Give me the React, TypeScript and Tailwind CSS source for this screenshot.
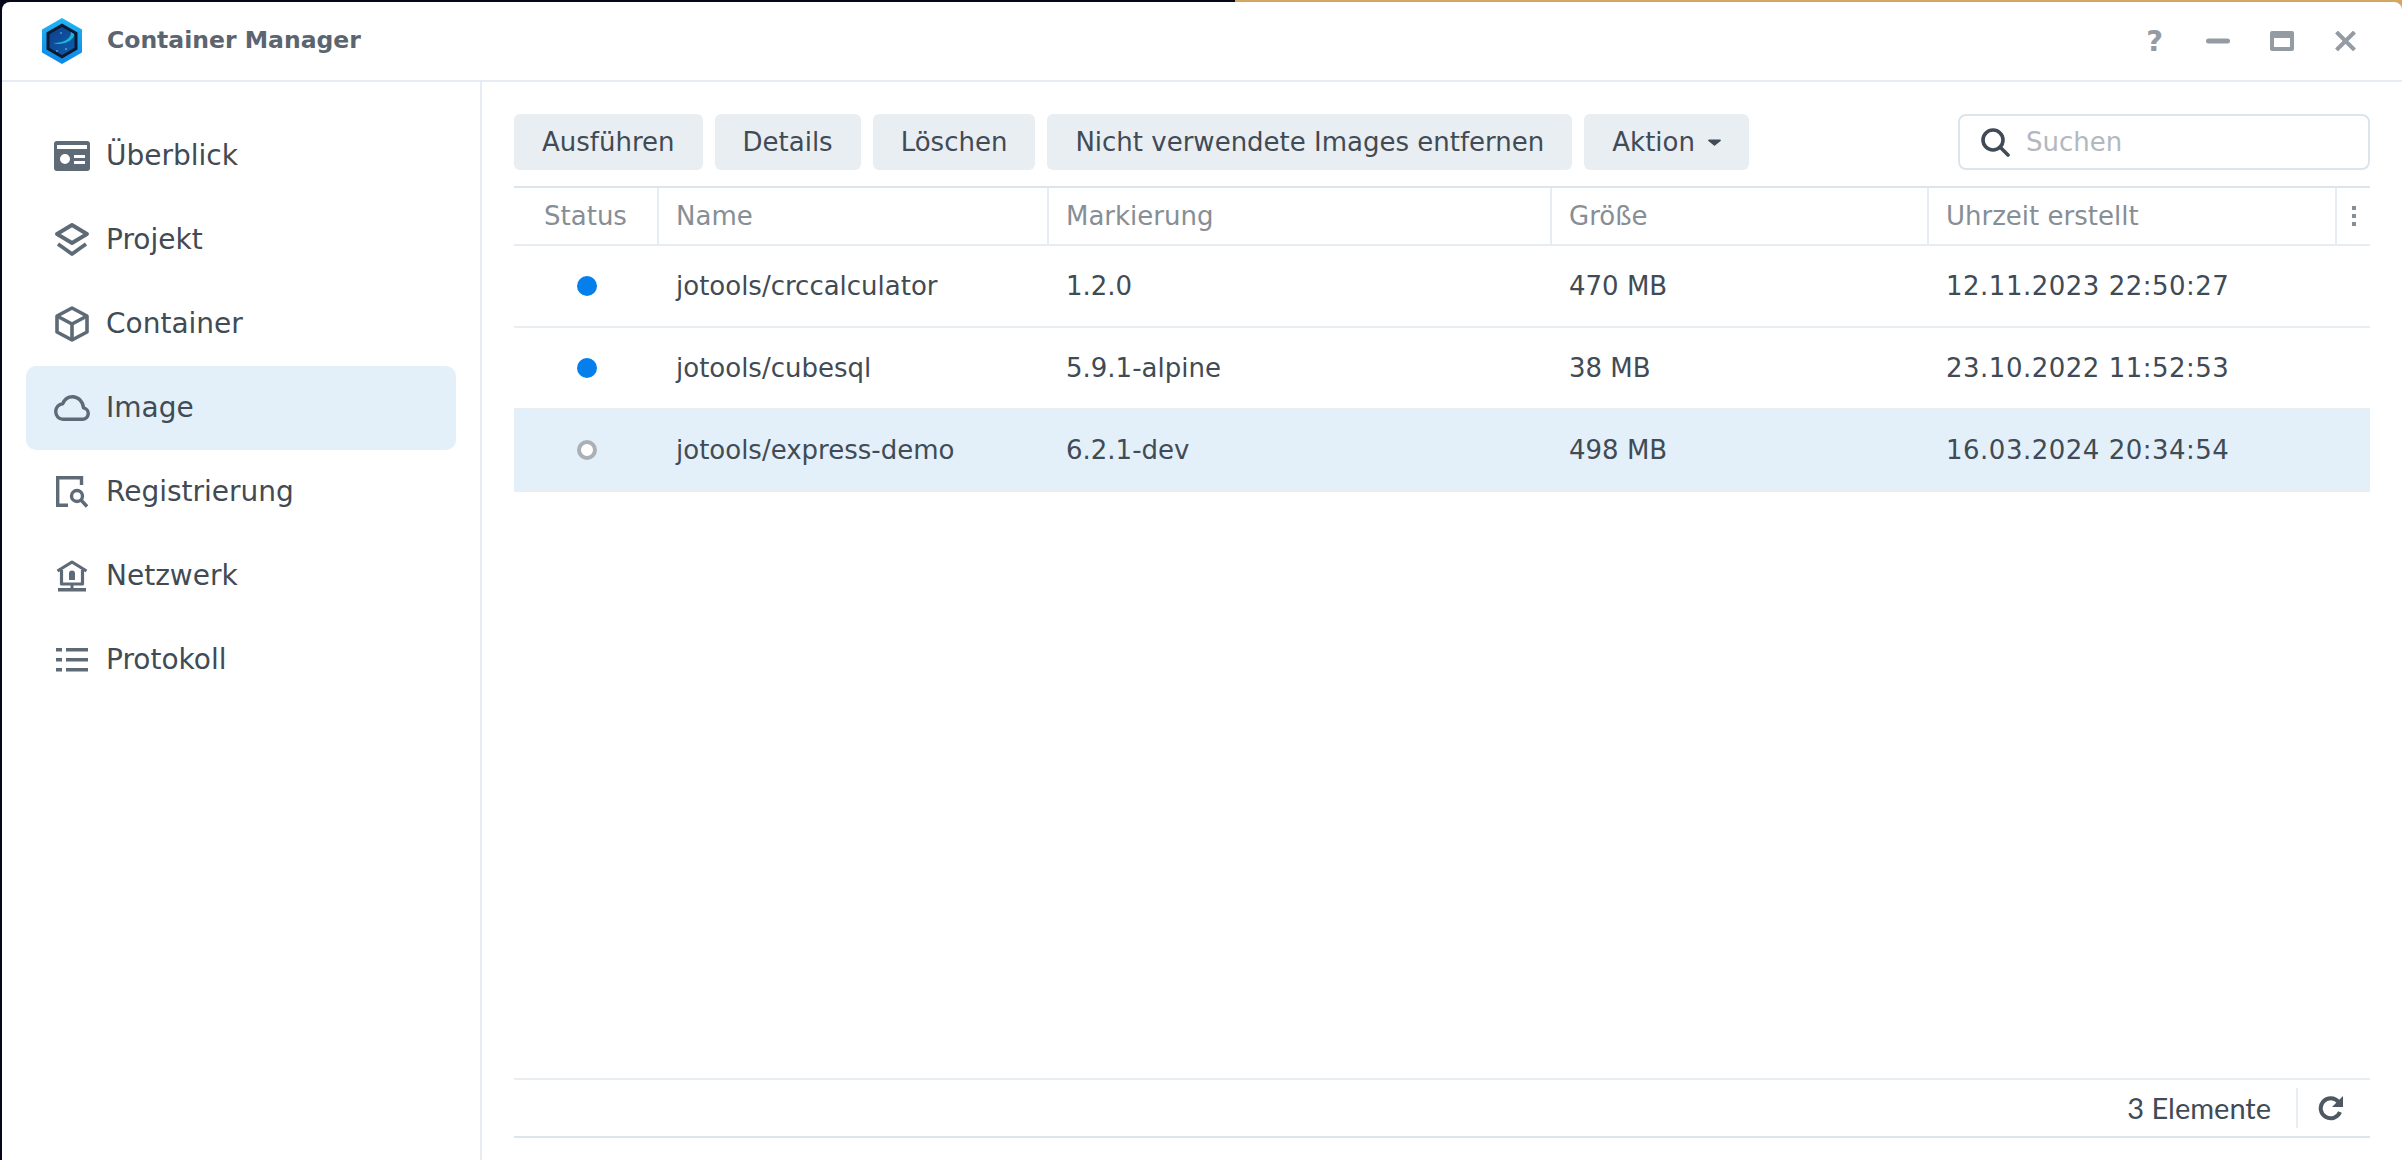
const FONT = "font-['DejaVu_Sans',sans-serif]";

const ICON_COLOR = "#5e6a75";

function OverviewIcon() {
  return (
    <svg width="36" height="30" viewBox="0 0 36 30">
      <path fill={ICON_COLOR} fillRule="evenodd" d="M3 0h30a3 3 0 0 1 3 3v24a3 3 0 0 1-3 3H3a3 3 0 0 1-3-3V3a3 3 0 0 1 3-3ZM3 4v4h30V4ZM11 13a5 5 0 1 0 0 10 5 5 0 0 0 0-10ZM20 14v3h11v-3ZM20 20v3h11v-3Z" />
    </svg>
  );
}

function ProjectIcon() {
  return (
    <svg width="36" height="34" viewBox="0 0 36 34" fill="none" stroke={ICON_COLOR} strokeWidth="3.8" strokeLinejoin="round">
      <path d="M18 2 33 11 18 20 3 11Z" />
      <path d="M4 21l14 10 14-10" />
    </svg>
  );
}

function ContainerIcon() {
  return (
    <svg width="36" height="36" viewBox="0 0 36 36" fill="none" stroke={ICON_COLOR} strokeWidth="3.6" strokeLinejoin="round">
      <path d="M18 2 33 10v16l-15 8-15-8V10Z" />
      <path d="M3 10l15 8 15-8M18 18v16" />
    </svg>
  );
}

function CloudIcon() {
  return (
    <svg width="36" height="26" viewBox="0 0 36 26" fill="none" stroke={ICON_COLOR} strokeWidth="3.4" strokeLinejoin="round">
      <path d="M9 24.300h19.500a5.800 5.800 0 0 0 1-11.500C28.800 6.200 24 1.700 18.600 1.700c-4.600 0-8.200 2.800-9.800 7C4.800 9 1.700 12.400 1.700 16.600c0 4.400 3.300 7.700 7.300 7.700Z" />
    </svg>
  );
}

function RegistryIcon() {
  return (
    <svg width="32" height="32" viewBox="0 0 32 32" fill="none" stroke={ICON_COLOR} strokeWidth="3.4">
      <path d="M25.500 9V1.700H1.700v27.600H12" />
      <circle cx="21" cy="20" r="5.500" />
      <path d="M25 24l6 6.500" />
    </svg>
  );
}

function NetworkIcon() {
  return (
    <svg width="32" height="32" viewBox="0 0 32 32">
      <path fill="none" stroke={ICON_COLOR} strokeWidth="3.200" strokeLinejoin="round" d="M1.500 11 16 2l14.500 9M5.500 10v14h21V10" />
      <path fill={ICON_COLOR} d="M13 13.500a3 3 0 0 1 6 0V20h-6ZM14.500 24h3v4h-3ZM2 28h28v3.500H2Z" />
    </svg>
  );
}

function LogIcon() {
  return (
    <svg width="32" height="24" viewBox="0 0 32 24" fill={ICON_COLOR}>
      <path d="M0 0h6v3.500H0ZM0 10h6v3.500H0ZM0 20h6v3.500H0ZM10 0h22v3.500H10ZM10 10h22v3.500H10ZM10 20h22v3.500H10Z" />
    </svg>
  );
}

function AppLogo() {
  return (
    <svg width="42" height="46" viewBox="0 0 42 46">
      <defs>
        <linearGradient id="rim" x1="0" y1="0" x2="0" y2="1">
          <stop offset="0" stopColor="#22b5f3" />
          <stop offset="1" stopColor="#0d86e6" />
        </linearGradient>
        <linearGradient id="core" x1="0" y1="0" x2="1" y2="1">
          <stop offset="0" stopColor="#0f3f8c" />
          <stop offset="1" stopColor="#0d5fae" />
        </linearGradient>
      </defs>
      <path fill="url(#rim)" d="M21 0l20 11.500v23L21 46 1 34.500v-23Z" />
      <path fill="#0b1a30" d="M21 5.500l15.500 9v17L21 40.500l-15.500-9v-17Z" />
      <path fill="url(#core)" d="M21 9l12.500 7.200v13.600L21 37 8.500 29.800V16.200Z" />
      <path fill="#19b6d8" d="M30 14c0 6-5 10.500-18 11 8 2.500 18-.5 21-7v-2Z" />
      <circle cx="20" cy="15" r="0.800" fill="#7fd4ff" />
      <circle cx="16" cy="33" r="0.800" fill="#7fd4ff" />
      <circle cx="25" cy="31" r="0.800" fill="#7fd4ff" />
    </svg>
  );
}

const navItems = [
  { label: "Überblick", icon: <OverviewIcon /> },
  { label: "Projekt", icon: <ProjectIcon /> },
  { label: "Container", icon: <ContainerIcon /> },
  { label: "Image", icon: <CloudIcon />, active: true },
  { label: "Registrierung", icon: <RegistryIcon /> },
  { label: "Netzwerk", icon: <NetworkIcon /> },
  { label: "Protokoll", icon: <LogIcon /> },
];

const rows = [
  { on: true, name: "jotools/crccalculator", tag: "1.2.0", size: "470 MB", created: "12.11.2023 22:50:27" },
  { on: true, name: "jotools/cubesql", tag: "5.9.1-alpine", size: "38 MB", created: "23.10.2022 11:52:53" },
  { on: false, name: "jotools/express-demo", tag: "6.2.1-dev", size: "498 MB", created: "16.03.2024 20:34:54", selected: true },
];

function ToolButton({ children }: { children: React.ReactNode }) {
  return (
    <button className="flex h-[56px] items-center rounded-[6px] bg-[#e9eef2] px-[28px] text-[26px] text-[#414b55]">
      {children}
    </button>
  );
}

export default function App() {
  return (
    <div className={`relative h-[1160px] w-[2402px] overflow-hidden bg-[#04081a] pl-[2px] pt-[2px] ${FONT}`}>
      {/* wallpaper sliver above the window */}
      <div className="absolute right-0 top-0 h-[10px] w-[1167px] bg-[#d3a662]" />
      <div className="relative flex h-[1158px] flex-col rounded-t-[8px] bg-white">
        <header className="flex h-[80px] shrink-0 items-center border-b-2 border-[#e6ecf1]">
          <div className="ml-[39px] flex w-[42px] shrink-0">
            <AppLogo />
          </div>
          <span className="ml-[24px] text-[23.5px] font-bold text-[#5b6570]">Container Manager</span>
          <div className="ml-auto flex items-center pr-[46px] text-[#949ba2]">
            <span className="text-[29px] font-bold leading-none">?</span>
            <svg className="ml-[43px]" width="24" height="6" viewBox="0 0 24 6" fill="currentColor">
              <rect width="24" height="5" y="0.500" rx="2.500" />
            </svg>
            <svg className="ml-[40px]" width="24" height="20" viewBox="0 0 24 20" fill="currentColor">
              <path fillRule="evenodd" d="M2 0h20a2 2 0 0 1 2 2v16a2 2 0 0 1-2 2H2a2 2 0 0 1-2-2V2a2 2 0 0 1 2-2Zm2 7v9h16V7Z" />
            </svg>
            <svg className="ml-[41px]" width="21" height="20" viewBox="0 0 21 20" fill="none" stroke="currentColor" strokeWidth="4">
              <path d="M1.500 1l18 18M19.500 1l-18 18" />
            </svg>
          </div>
        </header>

        <div className="flex min-h-0 flex-1">
          <nav className="w-[480px] shrink-0 border-r-2 border-[#e6ecf1] pl-[24px] pr-[24px] pt-[32px]">
            {navItems.map((item) => (
              <div
                key={item.label}
                className={`flex h-[84px] items-center rounded-[10px] ${item.active ? "bg-[#e3f0fa]" : ""}`}
              >
                <span className="flex w-[80px] shrink-0 justify-center pl-[12px]">{item.icon}</span>
                <span className="text-[28px] text-[#414b55]">{item.label}</span>
              </div>
            ))}
          </nav>

          <main className="flex min-w-0 flex-1 flex-col pl-[32px] pr-[32px] pt-[32px]">
            <div className="flex shrink-0 gap-[12px]">
              <ToolButton>Ausführen</ToolButton>
              <ToolButton>Details</ToolButton>
              <ToolButton>Löschen</ToolButton>
              <ToolButton>Nicht verwendete Images entfernen</ToolButton>
              <ToolButton>
                Aktion
                <svg className="ml-[13px]" width="13" height="7" viewBox="0 0 13 7" fill="#414b55">
                  <path d="M1 .500h11a.800.800 0 0 1 .600 1.400L7 6.500a.800.800 0 0 1-1 0L.400 1.900A.800.800 0 0 1 1 .500Z" />
                </svg>
              </ToolButton>
              <div className="ml-auto flex h-[56px] w-[412px] items-center rounded-[8px] border-2 border-[#dbe5ee] pl-[20px]">
                <svg width="30" height="30" viewBox="0 0 30 30" fill="none" stroke="#414b55" strokeWidth="3.600">
                  <circle cx="13" cy="13" r="10" />
                  <path d="M20 20l8 8" strokeLinecap="round" />
                </svg>
                <span className="ml-[16px] text-[26px] text-[#b2b8be]">Suchen</span>
              </div>
            </div>

            <div className="mt-[16px] flex h-[60px] shrink-0 border-y-2 border-t-[#dbe5ee] border-b-[#e6ecf1] text-[26px] text-[#868e96]">
              <div className="flex w-[145px] items-center justify-center border-r-2 border-[#e6ecf1]">Status</div>
              <div className="flex w-[390px] items-center border-r-2 border-[#e6ecf1] pl-[17px]">Name</div>
              <div className="flex w-[503px] items-center border-r-2 border-[#e6ecf1] pl-[17px]">Markierung</div>
              <div className="flex w-[377px] items-center border-r-2 border-[#e6ecf1] pl-[17px]">Größe</div>
              <div className="flex w-[408px] items-center border-r-2 border-[#e6ecf1] pl-[17px]">Uhrzeit erstellt</div>
              <div className="flex flex-1 items-center justify-center">
                <svg width="6" height="22" viewBox="0 0 6 22" fill="#868e96">
                  <path d="M1 1h4v4H1ZM1 9h4v4H1ZM1 17h4v4H1Z" />
                </svg>
              </div>
            </div>

            <div className="min-h-0 flex-1">
              {rows.map((row) => (
                <div
                  key={row.name}
                  className={`flex h-[82px] items-center border-b-2 border-[#e9eef2] text-[26px] text-[#414b55] ${row.selected ? "bg-[#e3f0fa]" : ""}`}
                >
                  <div className="flex w-[145px] justify-center">
                    {row.on ? (
                      <span className="size-[20px] rounded-full bg-[#057feb]" />
                    ) : (
                      <span className="size-[20px] rounded-full border-[4px] border-[#abb0b5] bg-white" />
                    )}
                  </div>
                  <div className="w-[390px] pl-[17px]">{row.name}</div>
                  <div className="w-[503px] pl-[17px]">{row.tag}</div>
                  <div className="w-[377px] pl-[17px]">{row.size}</div>
                  <div className="w-[408px] pl-[17px] tracking-[0.5px]">{row.created}</div>
                </div>
              ))}
            </div>

            <footer className="mb-[22px] flex h-[60px] shrink-0 items-center justify-end border-y-2 border-t-[#e9eef2] border-b-[#dbe5ee]">
              <span className="font-['Lato',sans-serif] text-[29px] text-[#414b55]">3 Elemente</span>
              <span className="ml-[25px] h-[40px] w-[2px] bg-[#e9eef2]" />
              <svg className="ml-[20px] mr-[26px]" width="26" height="26" viewBox="0 0 26 26" fill="none">
                <path stroke="#4d5862" strokeWidth="4" d="M22 17a10 10 0 1 1-1.500-10" />
                <path fill="#4d5862" d="M25 1v11H14Z" />
              </svg>
            </footer>
          </main>
        </div>
      </div>
    </div>
  );
}
